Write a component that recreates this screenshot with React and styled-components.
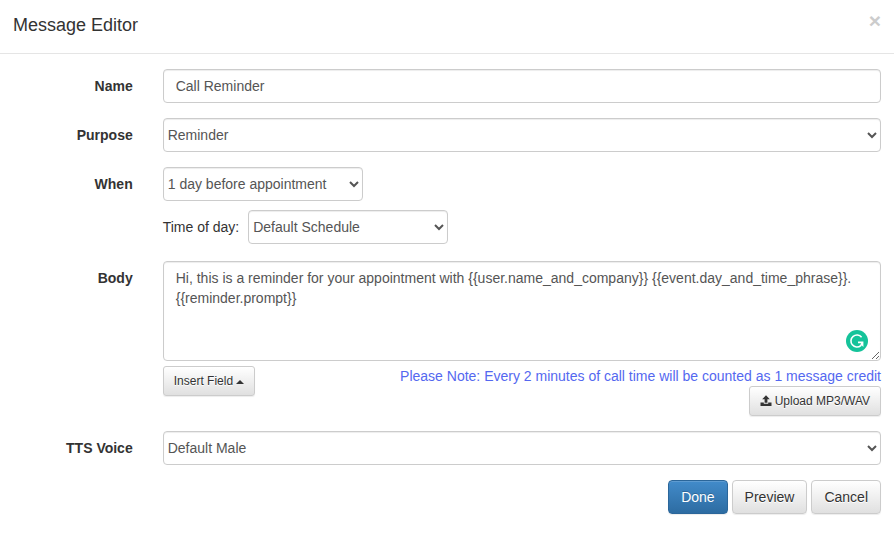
import React from "react";
import styled, { createGlobalStyle, css } from "styled-components";

const GlobalStyle = createGlobalStyle`
  *, *::before, *::after { box-sizing: border-box; }
  body {
    margin: 0;
    background: #fff;
    color: #333;
    font: 14px/20px "Liberation Sans", Arial, sans-serif;
  }
`;

const Header = styled.header`
  display: flex;
  justify-content: space-between;
  align-items: flex-start;
  padding: 12px 13px 15px;
  border-bottom: 1px solid #e5e5e5;
`;

const Title = styled.h1`
  margin: 0;
  font-size: 18px;
  line-height: 26px;
  font-weight: 500;
`;

const CloseButton = styled.button`
  padding: 0;
  border: 0;
  background: transparent;
  color: #ccc;
  font: bold 21px/18px "Liberation Sans", Arial, sans-serif;
  cursor: pointer;
`;

const Form = styled.form`
  display: flex;
  flex-direction: column;
  gap: 15px;
  padding: 15px 13px 28px;
`;

const Row = styled.div`
  display: grid;
  grid-template-columns: minmax(0, 1fr) minmax(0, 6fr);
  column-gap: 30px;
  align-items: start;
`;

const RowLabel = styled.label`
  padding-top: 7px;
  text-align: right;
  font-weight: bold;
`;

const fieldStyle = css`
  display: block;
  width: 100%;
  border: 1px solid #ccc;
  border-radius: 4px;
  background-color: #fff;
  box-shadow: inset 0 1px 1px rgba(0, 0, 0, 0.075);
  color: #555;
  font: inherit;
`;

const TextInput = styled.input`
  ${fieldStyle}
  height: 34px;
  padding: 6px 12px;
`;

const Select = styled.select`
  ${fieldStyle}
  width: ${(p) => p.$width || "100%"};
  height: 34px;
  padding: 6px 0;
`;

const TextArea = styled.textarea`
  ${fieldStyle}
  height: 100px;
  padding: 6px 12px;
  resize: vertical;
`;

const WhenFields = styled.div`
  display: flex;
  flex-direction: column;
  gap: 9px;
  padding-bottom: 2px;
`;

const TimeOfDay = styled.div`
  display: flex;
  align-items: center;
  gap: 9px;
`;

const BodyField = styled.div`
  position: relative;
`;

const AssistantBadge = styled.svg`
  position: absolute;
  right: 13px;
  bottom: 9px;
  width: 22px;
  height: 22px;
`;

const BodyTools = styled.div`
  display: flex;
  justify-content: space-between;
  align-items: flex-start;
  margin-top: 5px;
`;

const NoteColumn = styled.div`
  display: flex;
  flex-direction: column;
  align-items: flex-end;
`;

const Note = styled.p`
  margin: 0;
  color: #5468f0;
`;

const Button = styled.button`
  display: inline-flex;
  align-items: center;
  justify-content: center;
  gap: 3px;
  padding: ${(p) => (p.$small ? "5px 10px" : "6px 12px")};
  border: 1px solid ${(p) => (p.$primary ? "#2b669a" : "#ccc")};
  border-radius: ${(p) => (p.$small ? "3px" : "4px")};
  background: ${(p) =>
    p.$primary
      ? "linear-gradient(#428bca, #2d6ca2)"
      : "linear-gradient(#fff, #e0e0e0)"};
  box-shadow: inset 0 1px 0 rgba(255, 255, 255, 0.15),
    0 1px 1px rgba(0, 0, 0, 0.075);
  color: ${(p) => (p.$primary ? "#fff" : "#333")};
  font-family: inherit;
  font-size: ${(p) => (p.$small ? "12px" : "14px")};
  line-height: ${(p) => (p.$small ? "18px" : "20px")};
  text-shadow: ${(p) =>
    p.$primary ? "0 -1px 0 rgba(0, 0, 0, 0.2)" : "0 1px 0 #fff"};
  cursor: pointer;
`;

const CaretUp = styled.span`
  margin-top: 2px;
  border-right: 4px solid transparent;
  border-bottom: 4px solid currentColor;
  border-left: 4px solid transparent;
`;

const Actions = styled.div`
  display: flex;
  justify-content: flex-end;
  gap: 4px;
`;

const UploadIcon = () => (
  <svg width="12" height="12" viewBox="0 0 12 12" fill="currentColor" aria-hidden="true">
    <path d="M6 0.2 L9.8 4.2 H7.4 V7.8 H4.6 V4.2 H2.2 Z" />
    <path d="M0.5 7.6 H3.8 V8.8 H8.2 V7.6 H11.5 V11 H0.5 Z" />
  </svg>
);

export default function App() {
  return (
    <>
      <GlobalStyle />
      <Header>
        <Title>Message Editor</Title>
        <CloseButton type="button" aria-label="Close">×</CloseButton>
      </Header>
      <Form onSubmit={(e) => e.preventDefault()}>
        <Row>
          <RowLabel htmlFor="name">Name</RowLabel>
          <TextInput id="name" type="text" defaultValue="Call Reminder" />
        </Row>
        <Row>
          <RowLabel htmlFor="purpose">Purpose</RowLabel>
          <Select id="purpose">
            <option>Reminder</option>
          </Select>
        </Row>
        <Row>
          <RowLabel htmlFor="when">When</RowLabel>
          <WhenFields>
            <Select id="when" $width="200px">
              <option>1 day before appointment</option>
            </Select>
            <TimeOfDay>
              <label htmlFor="time">Time of day:</label>
              <Select id="time" $width="200px">
                <option>Default Schedule</option>
              </Select>
            </TimeOfDay>
          </WhenFields>
        </Row>
        <Row>
          <RowLabel htmlFor="body">Body</RowLabel>
          <div>
            <BodyField>
              <TextArea
                id="body"
                spellCheck={false}
                defaultValue={
                  "Hi, this is a reminder for your appointment with {{user.name_and_company}} {{event.day_and_time_phrase}}. {{reminder.prompt}}"
                }
              />
              <AssistantBadge viewBox="0 0 22 22" aria-hidden="true">
                <circle cx="11" cy="11" r="11" fill="#15c39a" />
                <path
                  d="M15.6 7.2 A6 6 0 1 0 14.8 15.6 L16.4 12.4"
                  fill="none"
                  stroke="#fff"
                  strokeWidth="1.6"
                />
                <path d="M12 11.6 H17.4 V17 L15.7 15.3 L15.7 13.2 H12 Z" fill="#fff" />
              </AssistantBadge>
            </BodyField>
            <BodyTools>
              <Button type="button" $small>
                Insert Field
                <CaretUp />
              </Button>
              <NoteColumn>
                <Note>
                  Please Note: Every 2 minutes of call time will be counted as 1 message credit
                </Note>
                <Button type="button" $small>
                  <UploadIcon />
                  Upload MP3/WAV
                </Button>
              </NoteColumn>
            </BodyTools>
          </div>
        </Row>
        <Row>
          <RowLabel htmlFor="voice">TTS Voice</RowLabel>
          <Select id="voice">
            <option>Default Male</option>
          </Select>
        </Row>
        <Actions>
          <Button type="submit" $primary>Done</Button>
          <Button type="button">Preview</Button>
          <Button type="button">Cancel</Button>
        </Actions>
      </Form>
    </>
  );
}
